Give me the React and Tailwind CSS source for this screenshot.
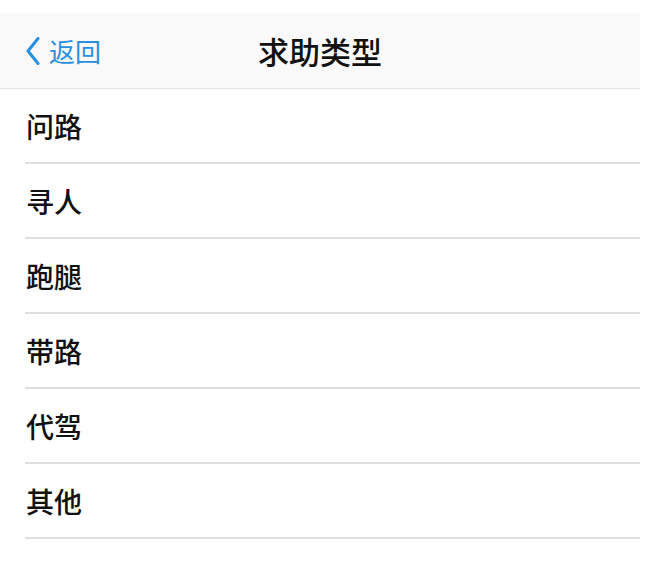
import React from "react";

const items = ["问路", "寻人", "跑腿", "带路", "代驾", "其他"];

export default function App() {
  return (
    <div
      className="w-[661px] h-[568px] bg-white"
      style={{ fontFamily: '"Noto Sans CJK SC", "Noto Sans", sans-serif' }}
    >
      <div className="w-[640px]">
        <div className="h-[13px] bg-white" />
        <div className="relative h-[76px] bg-[#f9f9f9] border-b border-[#e2e2e2] flex items-center justify-center">
          <div className="absolute left-[24px] top-0 bottom-0 flex items-center text-[#2a8ee0]">
            <svg width="18" height="28" viewBox="0 0 18 28" className="mr-[7px]">
              <path d="M14 1.5 L4 14 L14 26.5" fill="none" stroke="#2a8ee0" strokeWidth="3" strokeLinecap="round" strokeLinejoin="round" />
            </svg>
            <span className="text-[26px] leading-none">返回</span>
          </div>
          <span className="text-[31px] leading-none text-[#111] font-medium">求助类型</span>
        </div>
        {items.map((t) => (
          <div key={t} className="ml-[25px] h-[75px] border-b-[2px] border-[#dedede] flex items-center">
            <span className="pl-[1px] text-[28px] leading-none text-[#111] font-medium">{t}</span>
          </div>
        ))}
      </div>
    </div>
  );
}
